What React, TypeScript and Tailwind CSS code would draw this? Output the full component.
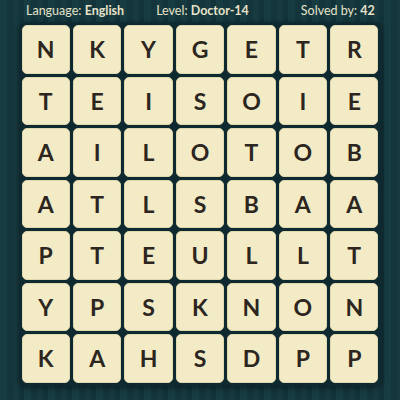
import React from "react";

const rows = [
  "NKYGETR",
  "TEISOIE",
  "AILOTOB",
  "ATLSBAA",
  "PTEULLT",
  "YPSKNON",
  "KAHSDPP",
];

export default function App() {
  return (
    <div
      className="w-[400px] h-[400px] overflow-hidden bg-[#163a40] bg-[repeating-linear-gradient(90deg,#173d43_0px,#173d43_7px,#14353b_7px,#14353b_13px,#163a40_13px,#163a40_19px,#12333a_19px,#12333a_24px)] flex flex-col items-center"
      style={{ fontFamily: "Lato, 'Open Sans', sans-serif" }}
    >
      <div className="w-full h-[23px] flex items-center pl-[26px] text-[12.5px] text-[#e6e2c8]">
        <span>
          Language: <b className="font-bold">English</b>
        </span>
        <span className="ml-[32px]">
          Level: <b className="font-bold">Doctor-14</b>
        </span>
        <span className="ml-[52px]">
          Solved by: <b className="font-bold">42</b>
        </span>
      </div>
      <div className="mt-[-1px] p-[3px] rounded-[7px] bg-[#0e2a30] shadow-[0_2px_6px_rgba(0,0,0,0.45)]">
        <div className="w-[357px] grid grid-cols-7 gap-[3px]">
          {rows.flatMap((r, ri) =>
            r.split("").map((ch, ci) => (
              <div
                key={ri + "-" + ci}
                className="h-[48.5px] rounded-[5px] bg-[#f2ebc6] border border-[#e0d8ae] flex items-center justify-center text-[23px] font-bold text-[#2c2520]"
              >
                {ch}
              </div>
            ))
          )}
        </div>
      </div>
    </div>
  );
}
